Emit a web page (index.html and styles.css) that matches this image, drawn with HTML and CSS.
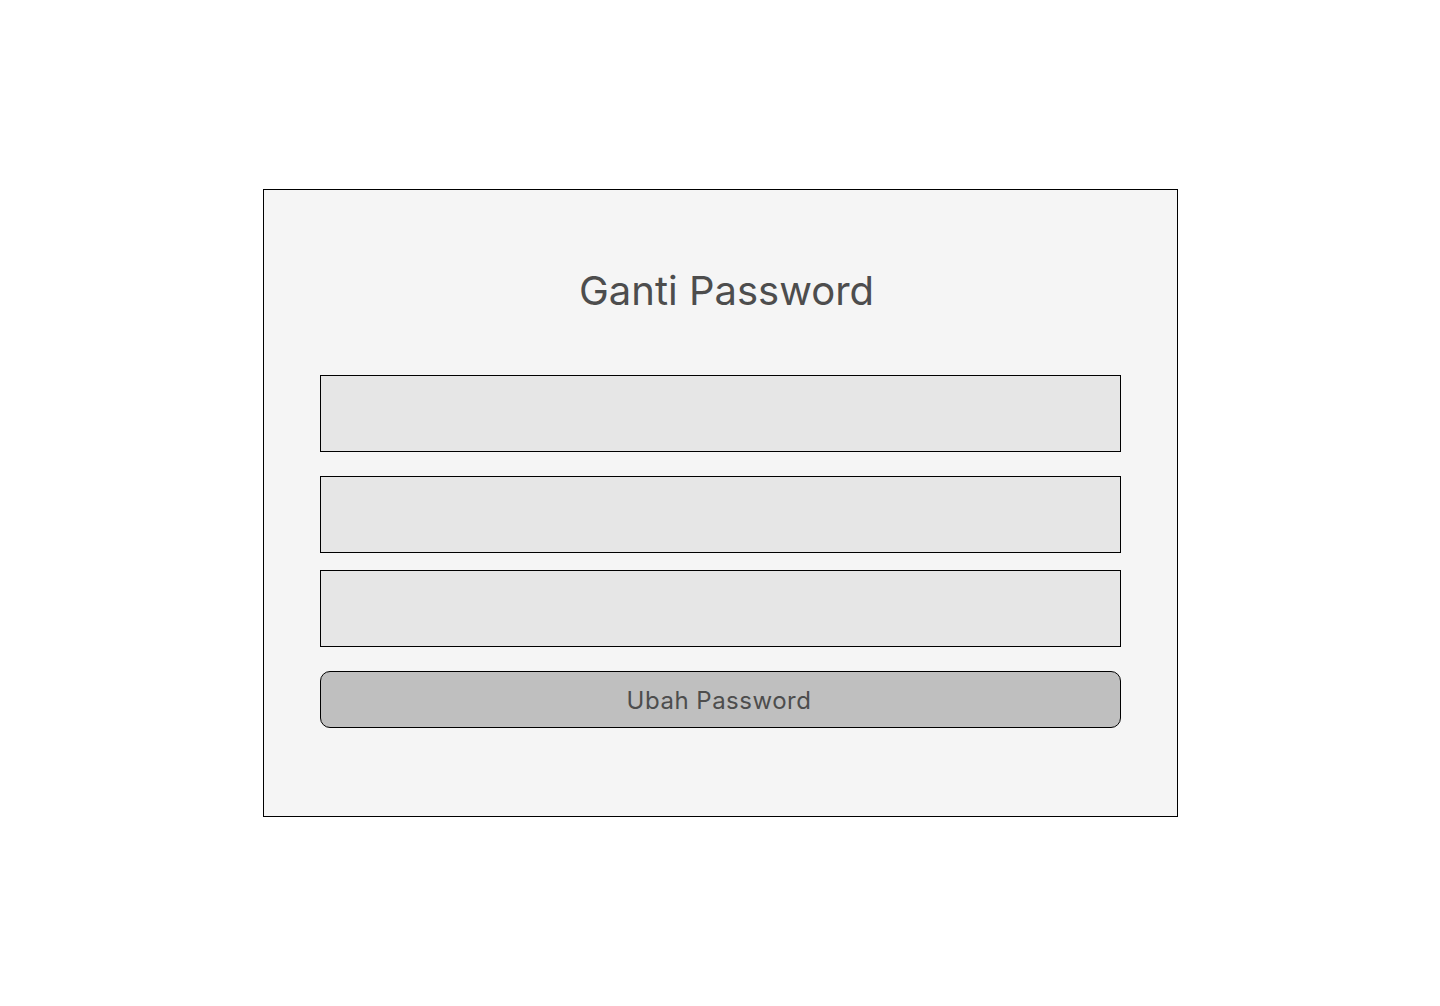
FILE: index.html
```html
<!DOCTYPE html>
<html lang="id">
<head>
<meta charset="utf-8">
<title>Ganti Password</title>
<link rel="stylesheet" href="styles.css">
</head>
<body>
<main class="page">
  <form class="card">
    <h1 class="title">Ganti Password</h1>
    <div class="fields">
      <input class="field field-first" type="password" aria-label="Password lama">
      <input class="field field-second" type="password" aria-label="Password baru">
      <input class="field field-third" type="password" aria-label="Konfirmasi password">
    </div>
    <button class="submit" type="button">Ubah Password</button>
  </form>
</main>
</body>
</html>
```
FILE: styles.css
```css
* { box-sizing: border-box; }
html, body {
  margin: 0;
  padding: 0;
  background: #ffffff;
  font-family: Inter, "Noto Sans", sans-serif;
}
.page {
  width: 1440px;
  height: 1006px;
  padding-top: 189px;
  padding-left: 263px;
}
.card {
  width: 915px;
  height: 628px;
  border: 1px solid #000;
  background: #f5f5f5;
  padding: 77px 56px 0 56px;
  display: flex;
  flex-direction: column;
}
.title {
  margin: 0 0 0 12px;
  font-size: 40px;
  line-height: 48px;
  font-weight: 400;
  color: #4d4d4d;
  text-align: center;
}
.fields {
  margin-top: 60px;
  display: flex;
  flex-direction: column;
}
.field {
  display: block;
  width: 801px;
  height: 77px;
  margin: 0;
  border: 1px solid #000;
  border-radius: 0;
  background: #e6e6e6;
  outline: none;
}
.field-second { margin-top: 24px; }
.field-third { margin-top: 17px; }
.submit {
  margin-top: 24px;
  width: 801px;
  height: 57px;
  border: 1px solid #000;
  border-radius: 10px;
  background: #bfbfbf;
  font-family: Inter, "Noto Sans", sans-serif;
  font-size: 24px;
  letter-spacing: 0.5px;
  color: #4d4d4d;
  padding: 2px 3px 0 0;
}
```
